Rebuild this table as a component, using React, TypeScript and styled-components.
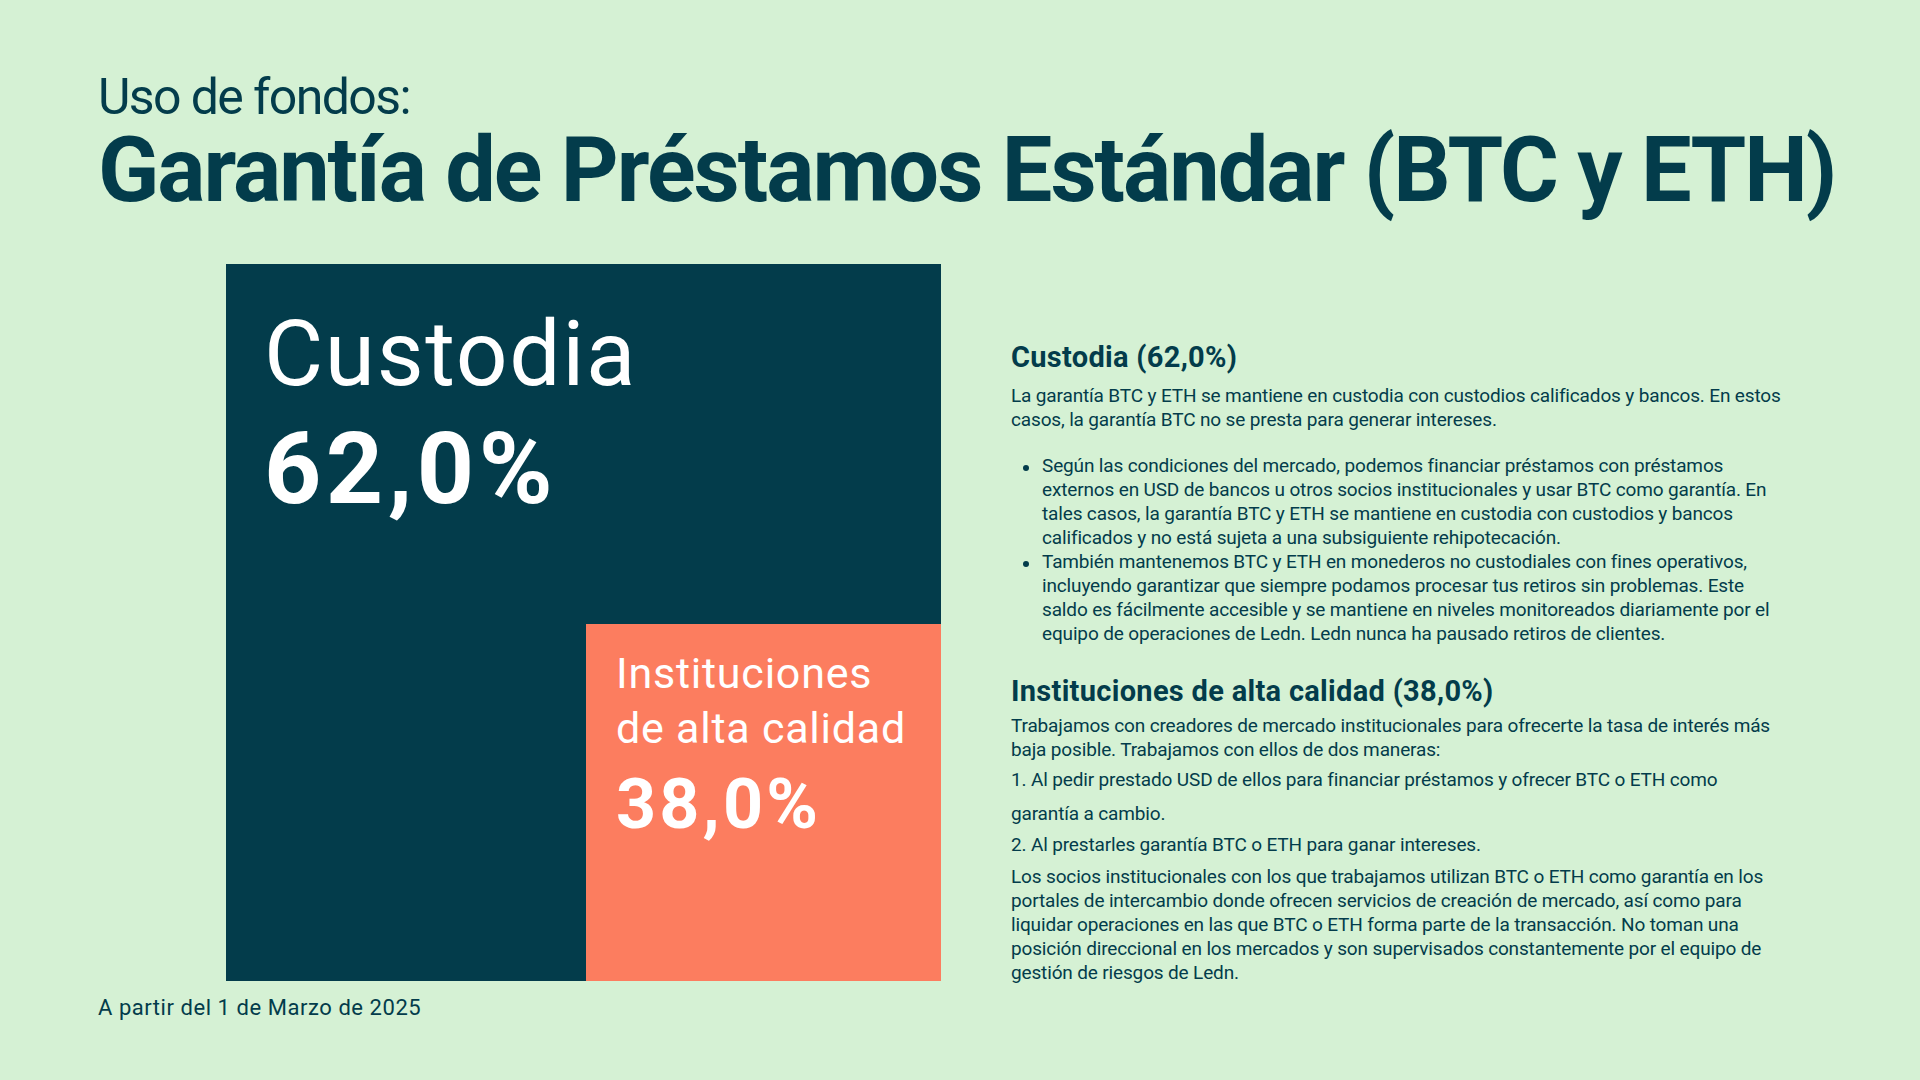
import React from 'react'
import styled, { createGlobalStyle } from 'styled-components'

const ink = '#033c4b'
const coral = '#fc7d5f'

const GlobalStyle = createGlobalStyle`
  html, body {
    margin: 0;
    padding: 0;
    background: #d5f1d4;
  }
  * { box-sizing: border-box; }
`

const Page = styled.div`
  width: 1920px;
  height: 1080px;
  padding: 72px 0 0 98px;
  background: #d5f1d4;
  color: ${ink};
  font-family: Roboto, "Liberation Sans", sans-serif;
  overflow: hidden;
`

const Kicker = styled.h2`
  margin: 0;
  font-size: 50px;
  line-height: 50px;
  font-weight: 400;
  letter-spacing: -1.6px;
`

const Title = styled.h1`
  margin: 4px 0 0;
  font-size: 90px;
  line-height: 90px;
  font-weight: 700;
  letter-spacing: -2px;
  white-space: nowrap;
`

const Main = styled.div`
  display: flex;
  align-items: flex-start;
  margin-top: 48px;
`

const LeftCol = styled.div`
  margin-left: 128px;
  width: 715px;
`

const Chart = styled.div`
  display: grid;
  grid-template-columns: 360px 355px;
  grid-template-rows: 360px 357px;
  background: ${ink};
  color: #fff;
`

const MainLabel = styled.div`
  grid-column: 1 / 3;
  grid-row: 1;
  padding: 45px 0 0 38px;
`

const Tile = styled.div`
  grid-column: 2;
  grid-row: 2;
  background: ${coral};
  padding: 22px 0 0 30px;
`

const Name = styled.div<{ $size: number; $lh: number }>`
  font-size: ${p => p.$size}px;
  line-height: ${p => p.$lh}px;
  font-weight: 400;
  letter-spacing: 0.018em;
`

const Share = styled.div<{ $size: number; $gap: number }>`
  margin-top: ${p => p.$gap}px;
  font-size: ${p => p.$size}px;
  line-height: ${p => p.$size}px;
  font-weight: 700;
  letter-spacing: 0.045em;
`

const Footnote = styled.p`
  margin: 16px 0 0 -128px;
  font-size: 22px;
  line-height: 22px;
  letter-spacing: 0.55px;
`

const RightCol = styled.div`
  margin-left: 70px;
  padding-top: 76px;
  width: 776px;
`

const Heading = styled.h3<{ $gap: number }>`
  margin: 0 0 ${p => p.$gap}px;
  font-size: 29px;
  line-height: 34px;
  font-weight: 700;
  letter-spacing: 0.3px;
`

const Text = styled.p<{ $lh?: number; $top?: number }>`
  margin: ${p => p.$top ?? 0}px 0 0;
  font-size: 19px;
  line-height: ${p => p.$lh ?? 24}px;
  letter-spacing: -0.15px;
`

const Bullets = styled.ul`
  list-style: none;
  margin: 22px 0 28px;
  padding: 0 0 0 31px;
`

const Bullet = styled.li`
  position: relative;
  font-size: 19px;
  line-height: 24px;
  letter-spacing: -0.15px;
  &::before {
    content: '';
    position: absolute;
    left: -19px;
    top: 11px;
    width: 6px;
    height: 6px;
    border-radius: 50%;
    background: ${ink};
  }
`

export default function App () {
  return (
    <Page>
      <GlobalStyle />
      <Kicker>Uso de fondos:</Kicker>
      <Title>Garantía de Préstamos Estándar (BTC y ETH)</Title>
      <Main>
        <LeftCol>
          <Chart>
            <MainLabel>
              <Name $size={91} $lh={91}>Custodia</Name>
              <Share $size={100} $gap={19}>62,0%</Share>
            </MainLabel>
            <Tile>
              <Name $size={43} $lh={55}>Instituciones<br />de alta calidad</Name>
              <Share $size={70} $gap={13}>38,0%</Share>
            </Tile>
          </Chart>
          <Footnote>A partir del 1 de Marzo de 2025</Footnote>
        </LeftCol>
        <RightCol>
          <Heading $gap={10}>Custodia (62,0%)</Heading>
          <Text>
            La garantía BTC y ETH se mantiene en custodia con custodios calificados y bancos. En estos
            casos, la garantía BTC no se presta para generar intereses.
          </Text>
          <Bullets>
            <Bullet>
              Según las condiciones del mercado, podemos financiar préstamos con préstamos externos en
              USD de bancos u otros socios institucionales y usar BTC como garantía. En tales casos, la
              garantía BTC y ETH se mantiene en custodia con custodios y bancos calificados y no está
              sujeta a una subsiguiente rehipotecación.
            </Bullet>
            <Bullet>
              También mantenemos BTC y ETH en monederos no custodiales con fines operativos, incluyendo
              garantizar que siempre podamos procesar tus retiros sin problemas. Este saldo es
              fácilmente accesible y se mantiene en niveles monitoreados diariamente por el equipo de
              operaciones de Ledn. Ledn nunca ha pausado retiros de clientes.
            </Bullet>
          </Bullets>
          <Heading $gap={6}>Instituciones de alta calidad (38,0%)</Heading>
          <Text>
            Trabajamos con creadores de mercado institucionales para ofrecerte la tasa de interés más
            baja posible. Trabajamos con ellos de dos maneras:
          </Text>
          <Text $lh={34} $top={1}>
            1. Al pedir prestado USD de ellos para financiar préstamos y ofrecer BTC o ETH como
            garantía a cambio.
          </Text>
          <Text $lh={28}>2. Al prestarles garantía BTC o ETH para ganar intereses.</Text>
          <Text $top={6}>
            Los socios institucionales con los que trabajamos utilizan BTC o ETH como garantía en los
            portales de intercambio donde ofrecen servicios de creación de mercado, así como para
            liquidar operaciones en las que BTC o ETH forma parte de la transacción. No toman una
            posición direccional en los mercados y son supervisados constantemente por el equipo de
            gestión de riesgos de Ledn.
          </Text>
        </RightCol>
      </Main>
    </Page>
  )
}
